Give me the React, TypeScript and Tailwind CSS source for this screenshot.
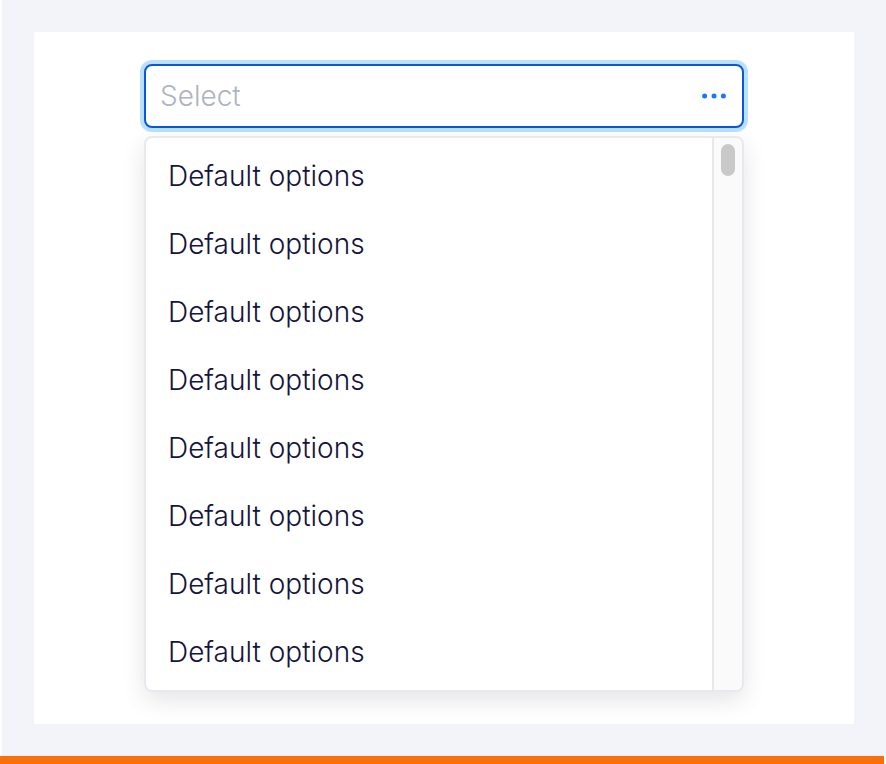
const options = Array.from({ length: 8 }, (_, index) => ({
  id: `option-${index + 1}`,
  label: "Default options",
}));

function LoadingDots() {
  return (
    <svg
      viewBox="0 0 24 6"
      className="h-[6px] w-6 shrink-0 fill-[#1677ff]"
      aria-hidden="true"
    >
      <circle cx="2.6" cy="3" r="2.5" />
      <circle cx="12" cy="3" r="2.5" />
      <circle cx="21.4" cy="3" r="2.5" />
    </svg>
  );
}

function SelectField() {
  return (
    <div className="flex h-16 items-center rounded-lg border-2 border-[#0958d9] bg-white pr-4 pl-[14px] shadow-[0_0_0_4px_#bae0ff]">
      <input
        type="text"
        role="combobox"
        aria-label="Select"
        aria-expanded="true"
        aria-controls="options"
        placeholder="Select"
        className="min-w-0 flex-1 bg-transparent text-[28px] leading-9 text-[#14143c] outline-none placeholder:text-[#b0b3c0]"
      />
      <LoadingDots />
    </div>
  );
}

function OptionsMenu() {
  return (
    <div className="flex overflow-hidden rounded-lg border-2 border-[#e6eaee] bg-white shadow-[0_8px_24px_rgba(0,0,0,0.11)]">
      <ul id="options" role="listbox" aria-label="Options" className="min-w-0 flex-1 py-1">
        {options.map((option) => (
          <li
            key={option.id}
            role="option"
            aria-selected="false"
            className="flex h-[68px] cursor-pointer items-center px-[22px] text-[28px] leading-9 text-[#14143c]"
          >
            {option.label}
          </li>
        ))}
      </ul>
      <div className="flex w-[30px] items-start justify-center border-l-2 border-[#e8e8e8] bg-[#fafafa] pt-[6px]">
        <div className="h-8 w-[14px] rounded-full bg-[#c9c9c9]" />
      </div>
    </div>
  );
}

export default function App() {
  return (
    <div className="flex min-h-screen flex-col bg-white font-['Inter','Liberation_Sans',sans-serif] font-light">
      <main className="ml-[2px] flex flex-1 flex-col bg-[#f3f4f9] p-8">
        <section className="flex flex-1 justify-center bg-white py-8">
          <div className="flex w-full max-w-[600px] flex-col gap-2">
            <SelectField />
            <OptionsMenu />
          </div>
        </section>
      </main>
      <footer className="mr-[2px] h-2 bg-[#f96f0a]" />
    </div>
  );
}
